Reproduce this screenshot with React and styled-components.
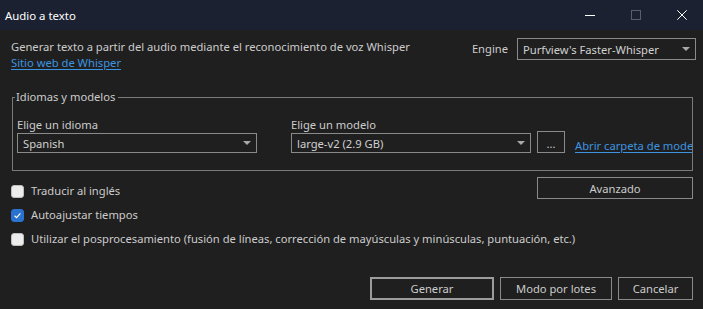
import React from "react";
import styled, { createGlobalStyle } from "styled-components";

const Global = createGlobalStyle`
  html, body { margin: 0; padding: 0; background: #1f1f1f; }
  body { font-family: "Noto Sans", "Open Sans", sans-serif; font-size: 11.2px; }
  * { box-sizing: border-box; }
`;

const Window = styled.div`
  width: 703px;
  height: 309px;
  display: flex;
  flex-direction: column;
  background: #1f1f1f;
  color: #cccccc;
  overflow: hidden;
`;

const TitleBar = styled.div`
  height: 30px;
  flex: 0 0 30px;
  display: flex;
  align-items: center;
  background: #1b2131;
  padding-left: 5px;
`;

const Title = styled.div`
  color: #ffffff;
  font-size: 11.4px;
  flex: 1;
`;

const WinControls = styled.div`
  display: flex;
  height: 30px;
  margin-right: -2px;
`;

const WinButton = styled.div`
  width: 46px;
  height: 30px;
  display: flex;
  align-items: center;
  justify-content: center;
`;

const Body = styled.div`
  flex: 1;
  display: flex;
  flex-direction: column;
  padding: 8px 10px 9px 11px;
`;

const TopRow = styled.div`
  display: flex;
  justify-content: space-between;
  align-items: flex-start;
  margin-right: -3px;
`;

const Description = styled.div`
  display: flex;
  flex-direction: column;
  align-items: flex-start;
  line-height: 16px;
  padding-top: 1px;
`;

const Link = styled.a`
  color: #3d94e0;
  text-decoration: underline;
  text-underline-offset: 2px;
  cursor: pointer;
  line-height: 16px;
  white-space: nowrap;
`;

const EngineField = styled.div`
  display: flex;
  align-items: center;
  gap: 9px;
`;

const Label = styled.div`
  line-height: 16px;
  white-space: nowrap;
`;

const ComboBox = styled.div`
  position: relative;
  width: ${(p) => p.$width}px;
  height: ${(p) => p.$height}px;
  border: 1px solid #8a8a8a;
  display: flex;
  align-items: center;
  padding-left: 5px;
  color: #d0d0d0;
  white-space: nowrap;
`;

const Arrow = styled.span`
  position: absolute;
  right: 5px;
  top: 50%;
  margin-top: -2px;
  width: 0;
  height: 0;
  border-left: 4px solid transparent;
  border-right: 4px solid transparent;
  border-top: 4px solid #a8a8a8;
`;

const Group = styled.fieldset`
  margin: 18px 0 0 1px;
  padding: 0 0 16px 4px;
  border: 1px solid #7a7a7a;
  min-width: 0;
  height: 82px;
`;

const Legend = styled.legend`
  padding: 0 3px 0 1px;
  margin-left: -2px;
  line-height: 16px;
  color: #cccccc;
`;

const GroupRow = styled.div`
  display: flex;
  align-items: flex-end;
  margin-top: 12px;
  overflow: hidden;
  white-space: nowrap;
`;

const Column = styled.div`
  display: flex;
  flex-direction: column;
  margin-right: ${(p) => p.$mr || 0}px;
`;

const Button = styled.div`
  width: ${(p) => p.$width}px;
  height: ${(p) => p.$height || 22}px;
  border: ${(p) => (p.$primary ? "2px solid #9c9c9c" : "1px solid #8a8a8a")};
  display: flex;
  align-items: center;
  justify-content: center;
  color: #cccccc;
  flex: 0 0 auto;
  white-space: nowrap;
`;

const DotsButton = styled(Button)`
  margin-left: 6px;
  align-items: flex-end;
  padding-bottom: 3px;
  line-height: 10px;
`;

const FolderLink = styled(Link)`
  margin-left: 10px;
  margin-bottom: -1px;
`;

const OptionsRow = styled.div`
  display: flex;
  justify-content: space-between;
  align-items: flex-start;
  margin-top: 6px;
`;

const CheckList = styled.div`
  display: flex;
  flex-direction: column;
  gap: 8px;
  margin-top: 8px;
`;

const CheckItem = styled.label`
  display: flex;
  align-items: center;
  gap: 7px;
  line-height: 16px;
  margin-top: ${(p) => p.$mt || 0}px;
  white-space: nowrap;
`;

const Box = styled.span`
  width: 13px;
  height: 13px;
  border-radius: 3px;
  flex: 0 0 13px;
  display: flex;
  align-items: center;
  justify-content: center;
  background: ${(p) => (p.$checked ? "#2a72cf" : "#ececec")};
  border: 1px solid ${(p) => (p.$checked ? "#2a72cf" : "#bdbdbd")};
`;

const BottomRow = styled.div`
  margin-top: auto;
  display: flex;
  justify-content: flex-end;
  gap: 6px;
`;

function Check({ checked, children, mt }) {
  return (
    <CheckItem $mt={mt}>
      <Box $checked={checked}>
        {checked && (
          <svg width="9" height="9" viewBox="0 0 9 9">
            <path d="M1.6 4.7 L3.6 6.6 L7.4 2.4" fill="none" stroke="#ffffff" strokeWidth="1.2" />
          </svg>
        )}
      </Box>
      {children}
    </CheckItem>
  );
}

export default function App() {
  return (
    <>
      <Global />
      <Window>
        <TitleBar>
          <Title>Audio a texto</Title>
          <WinControls>
            <WinButton>
              <svg width="10" height="10" viewBox="0 0 10 10">
                <path d="M0 5.5 H10" stroke="#ffffff" strokeWidth="1" />
              </svg>
            </WinButton>
            <WinButton>
              <svg width="10" height="10" viewBox="0 0 10 10">
                <rect x="0.5" y="0.5" width="9" height="9" fill="none" stroke="#5a5e68" strokeWidth="1" />
              </svg>
            </WinButton>
            <WinButton>
              <svg width="10" height="10" viewBox="0 0 10 10">
                <path d="M0.3 0.3 L9.7 9.7 M9.7 0.3 L0.3 9.7" stroke="#ffffff" strokeWidth="1" />
              </svg>
            </WinButton>
          </WinControls>
        </TitleBar>
        <Body>
          <TopRow>
            <Description>
              <span>Generar texto a partir del audio mediante el reconocimiento de voz Whisper</span>
              <Link>Sitio web de Whisper</Link>
            </Description>
            <EngineField>
              <Label>Engine</Label>
              <ComboBox $width={179} $height={22}>
                Purfview's Faster-Whisper
                <Arrow />
              </ComboBox>
            </EngineField>
          </TopRow>

          <Group>
            <Legend>Idiomas y modelos</Legend>
            <GroupRow>
              <Column $mr={34}>
                <Label>Elige un idioma</Label>
                <ComboBox $width={240} $height={20}>
                  Spanish
                  <Arrow />
                </ComboBox>
              </Column>
              <Column>
                <Label>Elige un modelo</Label>
                <ComboBox $width={240} $height={20}>
                  large-v2 (2.9 GB)
                  <Arrow />
                </ComboBox>
              </Column>
              <DotsButton $width={28} $height={22}>...</DotsButton>
              <FolderLink>Abrir carpeta de mode</FolderLink>
            </GroupRow>
          </Group>

          <OptionsRow>
            <Check mt={6}>Traducir al inglés</Check>
            <Button $width={156}>Avanzado</Button>
          </OptionsRow>
          <CheckList>
            <Check checked>Autoajustar tiempos</Check>
            <Check>
              Utilizar el posprocesamiento (fusión de líneas, corrección de mayúsculas y minúsculas, puntuación, etc.)
            </Check>
          </CheckList>

          <BottomRow>
            <Button $primary $width={124} $height={23}>Generar</Button>
            <Button $width={112} $height={23}>Modo por lotes</Button>
            <Button $width={75} $height={23}>Cancelar</Button>
          </BottomRow>
        </Body>
      </Window>
    </>
  );
}
